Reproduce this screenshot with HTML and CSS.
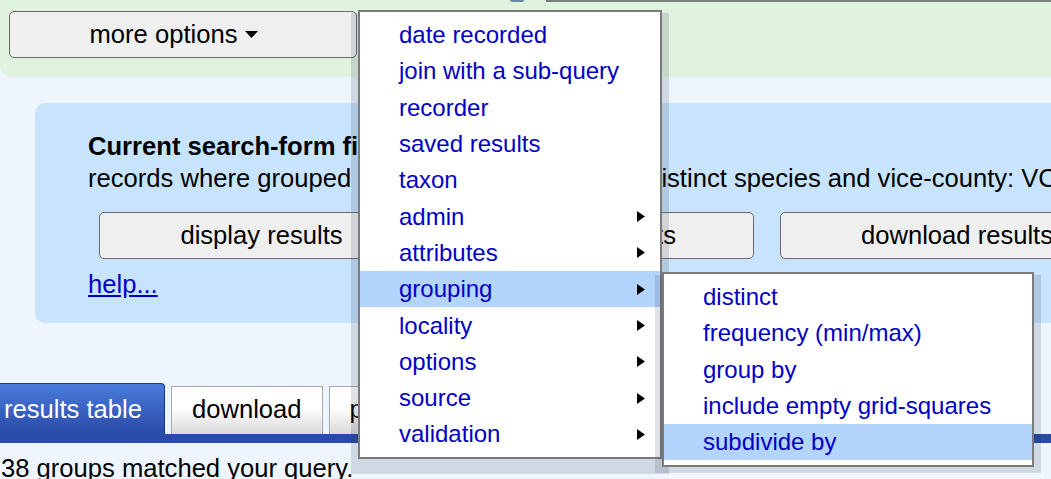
FILE: index.html
```html
<!DOCTYPE html>
<html lang="en">
<head>
<meta charset="utf-8">
<title>Search results</title>
<link rel="stylesheet" href="styles.css">
</head>
<body>
<div class="page">
  <header class="header">
    <div class="header-top">
      <span class="top-icon"></span>
      <span class="top-field"></span>
    </div>
    <button class="btn btn-more" type="button">more options <svg class="caret" width="13" height="7" viewBox="0 0 13 7"><path d="M0 0H13L6.5 7Z"/></svg></button>
  </header>

  <section class="filter-panel">
    <div class="filter-title">Current search-form filter:</div>
    <div class="filter-desc">records where grouped by year and date, and by distinct species and vice-county: VC55</div>
    <div class="filter-actions">
      <button class="btn btn-display" type="button">display results</button>
      <button class="btn btn-graph" type="button">graph results</button>
      <button class="btn btn-download" type="button">download results</button>
    </div>
    <div class="help-row"><a class="help" href="#">help...</a></div>
  </section>

  <nav class="tabs">
    <span class="tab tab-active">results table</span>
    <span class="tab">download</span>
    <span class="tab">printable</span>
  </nav>
  <div class="tabbar"></div>
  <p class="count">38 groups matched your query.</p>
</div>

<div class="menu menu-main">
  <div class="menu-panel">
    <div class="menu-item">date recorded</div>
    <div class="menu-item">join with a sub-query</div>
    <div class="menu-item">recorder</div>
    <div class="menu-item">saved results</div>
    <div class="menu-item">taxon</div>
    <div class="menu-item">admin<svg class="arrow" width="8" height="11" viewBox="0 0 8 11"><path d="M0 0L8 5.5L0 11Z"/></svg></div>
    <div class="menu-item">attributes<svg class="arrow" width="8" height="11" viewBox="0 0 8 11"><path d="M0 0L8 5.5L0 11Z"/></svg></div>
    <div class="menu-item is-active">grouping<svg class="arrow" width="8" height="11" viewBox="0 0 8 11"><path d="M0 0L8 5.5L0 11Z"/></svg></div>
    <div class="menu-item">locality<svg class="arrow" width="8" height="11" viewBox="0 0 8 11"><path d="M0 0L8 5.5L0 11Z"/></svg></div>
    <div class="menu-item">options<svg class="arrow" width="8" height="11" viewBox="0 0 8 11"><path d="M0 0L8 5.5L0 11Z"/></svg></div>
    <div class="menu-item">source<svg class="arrow" width="8" height="11" viewBox="0 0 8 11"><path d="M0 0L8 5.5L0 11Z"/></svg></div>
    <div class="menu-item">validation<svg class="arrow" width="8" height="11" viewBox="0 0 8 11"><path d="M0 0L8 5.5L0 11Z"/></svg></div>
  </div>
</div>

<div class="menu menu-sub">
  <div class="menu-panel">
    <div class="menu-item">distinct</div>
    <div class="menu-item">frequency (min/max)</div>
    <div class="menu-item">group by</div>
    <div class="menu-item">include empty grid-squares</div>
    <div class="menu-item is-active">subdivide by</div>
  </div>
</div>
</body>
</html>
```

FILE: styles.css
```css
html, body {
  margin: 0;
  padding: 0;
  overflow: hidden;
}

body {
  width: 1051px;
  height: 479px;
  background: #eef5fe;
  font-family: "Liberation Sans", Arial, Helvetica, sans-serif;
  font-size: 25.6px;
  color: #000;
  position: relative;
}

/* ---------- header ---------- */
.header {
  background: #dff3de;
  height: 77px;
  border-bottom-left-radius: 12px;
}

.header-top {
  display: flex;
  height: 2px;
}

.top-icon {
  margin-left: 510px;
  width: 14px;
  height: 2px;
  border-radius: 0 0 7px 7px;
  background: #6a8aa4;
}

.top-field {
  margin-left: 22px;
  flex: 1;
  height: 2px;
  background: #7a7f7a;
}

.btn {
  font-family: inherit;
  font-size: 25.6px;
  color: #000;
  background: #efefef;
  border: 1px solid #6a6a6a;
  border-radius: 5px;
  height: 47px;
  padding: 0;
  margin: 0;
  display: flex;
  align-items: center;
  justify-content: center;
  flex-shrink: 0;
  box-sizing: border-box;
}

.btn-more {
  margin: 9px 0 0 9px;
  width: 348px;
  padding-right: 18px;
  gap: 8px;
}

.caret {
  display: block;
  fill: #000;
}

/* ---------- filter panel ---------- */
.filter-panel {
  margin: 26px -40px 0 35px;
  padding: 27px 0 23px 53px;
  background: #c8e4fc;
  border-radius: 10px;
  line-height: 32px;
}

.filter-title {
  font-weight: bold;
  white-space: nowrap;
}

.filter-desc {
  white-space: nowrap;
}

.filter-actions {
  display: flex;
  gap: 26px;
  margin: 18px 0 0 11px;
}

.btn-display { width: 325px; }
.btn-graph { width: 304px; }
.btn-download { width: 354px; }

.help-row {
  margin-top: 9px;
}

.help {
  color: #0000cc;
  text-decoration: underline;
}

/* ---------- tabs ---------- */
.tabs {
  display: flex;
  align-items: flex-end;
  gap: 6px;
  margin: 60px 0 0 -19px;
}

.tab {
  line-height: 29px;
  padding: 8px 20px 10px;
  border: 1px solid #a8a8a8;
  border-bottom: none;
  background: linear-gradient(#ffffff 45%, #d9d9d9);
  white-space: nowrap;
}

.tab-active {
  padding: 11px 22px 10px;
  color: #fff;
  border-color: #1d3785;
  border-radius: 0 4px 0 0;
  background: linear-gradient(#4a7bdb, #2a4aa8);
}

.tabbar {
  height: 9px;
  background: #2a4aa8;
}

.count {
  margin: 11px 0 0 1px;
  white-space: nowrap;
}

/* ---------- dropdown menus ---------- */
.menu {
  position: absolute;
  z-index: 1;
  font-size: 24px;
}

.menu::after {
  content: "";
  position: absolute;
  z-index: -1;
  top: 3px;
  left: -7px;
  right: -7px;
  background: rgba(30, 45, 70, 0.14);
}

.menu-panel {
  background: #fff;
  border: 2px solid #7b7b7b;
}

.menu-main {
  left: 358px;
  top: 10px;
  width: 304px;
}

.menu-main .menu-panel {
  padding: 5px 0 4px;
}

.menu-main::after {
  bottom: -15px;
}

.menu-sub {
  left: 662px;
  top: 272px;
  width: 372px;
}

.menu-sub .menu-panel {
  padding: 5px 0 5px;
}

.menu-sub::after {
  bottom: -6px;
}

.menu-item {
  display: flex;
  align-items: center;
  justify-content: space-between;
  height: 36.3px;
  padding: 0 15px 0 39px;
  color: #0000c4;
  white-space: nowrap;
}

.menu-item.is-active {
  background: #b3d4fc;
}

.arrow {
  display: block;
  fill: #000;
}
```
